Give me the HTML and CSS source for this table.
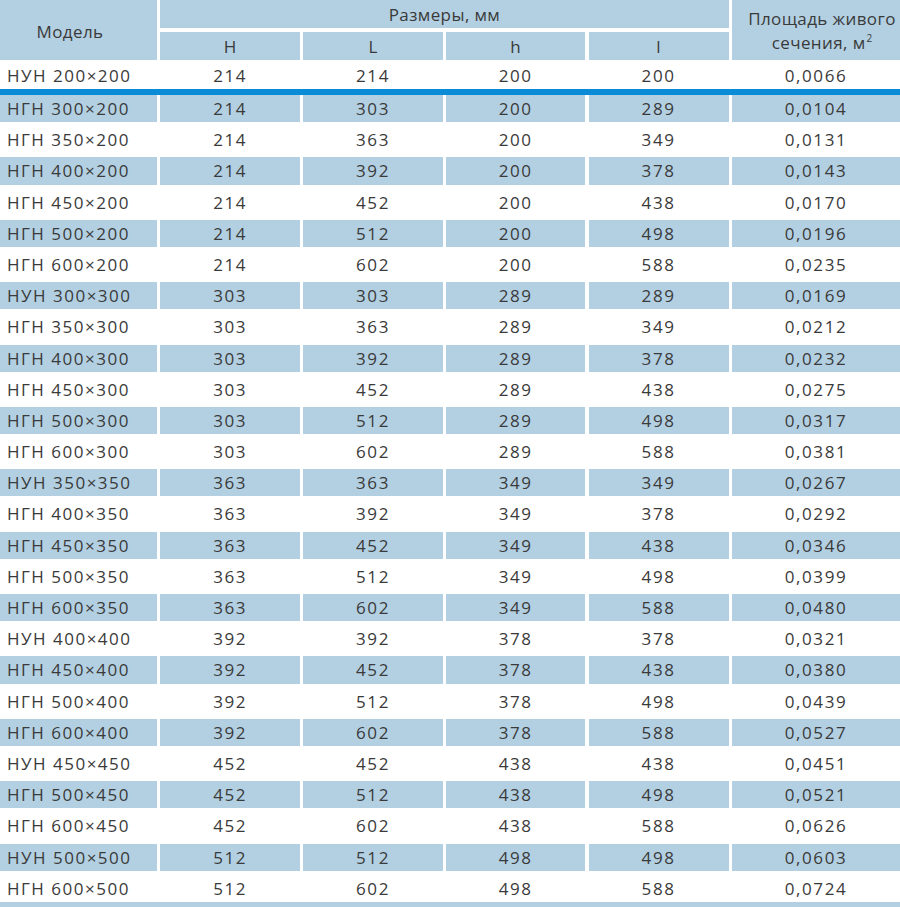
FILE: index.html
```html
<!DOCTYPE html>
<html lang="ru">
<head>
<meta charset="utf-8">
<title>Размеры</title>
<link rel="stylesheet" href="styles.css">
</head>
<body>
<div class="sheet">
  <div class="head">
    <div class="hc model-h"><span>Модель</span></div>
    <div class="hc group-h"><span>Размеры, мм</span></div>
    <div class="hc area-h"><span>Площадь живого<br>сечения, м<sup>2</sup></span></div>
    <div class="hc sub"><span>H</span></div>
    <div class="hc sub"><span>L</span></div>
    <div class="hc sub"><span>h</span></div>
    <div class="hc sub"><span>l</span></div>
  </div>
  <div class="row first"><div class="c m">НУН 200×200</div><div class="c">214</div><div class="c">214</div><div class="c">200</div><div class="c">200</div><div class="c">0,0066</div></div>
  <div class="divider"></div>
  <div class="body">
    <div class="row alt"><div class="c m">НГН 300×200</div><div class="c">214</div><div class="c">303</div><div class="c">200</div><div class="c">289</div><div class="c">0,0104</div></div>
    <div class="row"><div class="c m">НГН 350×200</div><div class="c">214</div><div class="c">363</div><div class="c">200</div><div class="c">349</div><div class="c">0,0131</div></div>
    <div class="row alt"><div class="c m">НГН 400×200</div><div class="c">214</div><div class="c">392</div><div class="c">200</div><div class="c">378</div><div class="c">0,0143</div></div>
    <div class="row"><div class="c m">НГН 450×200</div><div class="c">214</div><div class="c">452</div><div class="c">200</div><div class="c">438</div><div class="c">0,0170</div></div>
    <div class="row alt"><div class="c m">НГН 500×200</div><div class="c">214</div><div class="c">512</div><div class="c">200</div><div class="c">498</div><div class="c">0,0196</div></div>
    <div class="row"><div class="c m">НГН 600×200</div><div class="c">214</div><div class="c">602</div><div class="c">200</div><div class="c">588</div><div class="c">0,0235</div></div>
    <div class="row alt"><div class="c m">НУН 300×300</div><div class="c">303</div><div class="c">303</div><div class="c">289</div><div class="c">289</div><div class="c">0,0169</div></div>
    <div class="row"><div class="c m">НГН 350×300</div><div class="c">303</div><div class="c">363</div><div class="c">289</div><div class="c">349</div><div class="c">0,0212</div></div>
    <div class="row alt"><div class="c m">НГН 400×300</div><div class="c">303</div><div class="c">392</div><div class="c">289</div><div class="c">378</div><div class="c">0,0232</div></div>
    <div class="row"><div class="c m">НГН 450×300</div><div class="c">303</div><div class="c">452</div><div class="c">289</div><div class="c">438</div><div class="c">0,0275</div></div>
    <div class="row alt"><div class="c m">НГН 500×300</div><div class="c">303</div><div class="c">512</div><div class="c">289</div><div class="c">498</div><div class="c">0,0317</div></div>
    <div class="row"><div class="c m">НГН 600×300</div><div class="c">303</div><div class="c">602</div><div class="c">289</div><div class="c">588</div><div class="c">0,0381</div></div>
    <div class="row alt"><div class="c m">НУН 350×350</div><div class="c">363</div><div class="c">363</div><div class="c">349</div><div class="c">349</div><div class="c">0,0267</div></div>
    <div class="row"><div class="c m">НГН 400×350</div><div class="c">363</div><div class="c">392</div><div class="c">349</div><div class="c">378</div><div class="c">0,0292</div></div>
    <div class="row alt"><div class="c m">НГН 450×350</div><div class="c">363</div><div class="c">452</div><div class="c">349</div><div class="c">438</div><div class="c">0,0346</div></div>
    <div class="row"><div class="c m">НГН 500×350</div><div class="c">363</div><div class="c">512</div><div class="c">349</div><div class="c">498</div><div class="c">0,0399</div></div>
    <div class="row alt"><div class="c m">НГН 600×350</div><div class="c">363</div><div class="c">602</div><div class="c">349</div><div class="c">588</div><div class="c">0,0480</div></div>
    <div class="row"><div class="c m">НУН 400×400</div><div class="c">392</div><div class="c">392</div><div class="c">378</div><div class="c">378</div><div class="c">0,0321</div></div>
    <div class="row alt"><div class="c m">НГН 450×400</div><div class="c">392</div><div class="c">452</div><div class="c">378</div><div class="c">438</div><div class="c">0,0380</div></div>
    <div class="row"><div class="c m">НГН 500×400</div><div class="c">392</div><div class="c">512</div><div class="c">378</div><div class="c">498</div><div class="c">0,0439</div></div>
    <div class="row alt"><div class="c m">НГН 600×400</div><div class="c">392</div><div class="c">602</div><div class="c">378</div><div class="c">588</div><div class="c">0,0527</div></div>
    <div class="row"><div class="c m">НУН 450×450</div><div class="c">452</div><div class="c">452</div><div class="c">438</div><div class="c">438</div><div class="c">0,0451</div></div>
    <div class="row alt"><div class="c m">НГН 500×450</div><div class="c">452</div><div class="c">512</div><div class="c">438</div><div class="c">498</div><div class="c">0,0521</div></div>
    <div class="row"><div class="c m">НГН 600×450</div><div class="c">452</div><div class="c">602</div><div class="c">438</div><div class="c">588</div><div class="c">0,0626</div></div>
    <div class="row alt"><div class="c m">НУН 500×500</div><div class="c">512</div><div class="c">512</div><div class="c">498</div><div class="c">498</div><div class="c">0,0603</div></div>
    <div class="row last"><div class="c m">НГН 600×500</div><div class="c">512</div><div class="c">602</div><div class="c">498</div><div class="c">588</div><div class="c">0,0724</div></div>
  </div>
  <div class="bottom-bar"></div>
</div>
</body>
</html>
```

FILE: styles.css
```css
html, body {
  margin: 0;
  padding: 0;
  background: #ffffff;
}

.sheet {
  width: 900px;
  font-family: "Open Sans", "Noto Sans", "DejaVu Sans", sans-serif;
  font-size: 17px;
  letter-spacing: 1.6px;
  color: #3a3a3a;
}

.head,
.row {
  display: grid;
  grid-template-columns: 157px 139.5px 139.5px 139px 140px 1fr;
  column-gap: 3.4px;
}

.head {
  grid-template-rows: 28px 28px;
  row-gap: 4px;
  letter-spacing: 0.4px;
}

.hc {
  background: #b3d0e2;
  display: flex;
  align-items: center;
  justify-content: center;
  text-align: center;
}

.model-h {
  grid-column: 1;
  grid-row: 1 / 3;
  padding-right: 17px;
  padding-top: 2px;
}

.group-h {
  grid-column: 2 / 6;
  grid-row: 1;
}

.area-h {
  grid-column: 6;
  grid-row: 1 / 3;
  line-height: 24px;
  padding-top: 1px;
  padding-left: 12px;
}

.area-h sup {
  font-size: 10px;
  line-height: 0;
  vertical-align: 7px;
  letter-spacing: 0;
  margin-left: 1px;
}

.sub {
  grid-row: 2;
}

.row {
  margin-bottom: 4px;
}

.row.first {
  margin-bottom: 0;
}

.row.first .c {
  height: 29px;
  line-height: 31px;
}

.row.last {
  margin-bottom: 0;
}

.c {
  height: 27.2px;
  line-height: 28px;
  text-align: center;
  white-space: nowrap;
}

.c.m {
  text-align: left;
  padding-left: 7px;
  letter-spacing: 1.5px;
}

.row.alt .c {
  background: #b3d0e2;
}

.divider {
  height: 6px;
  background: #0a8bd8;
}

.bottom-bar {
  height: 5px;
  background: #b3d0e2;
}
```
